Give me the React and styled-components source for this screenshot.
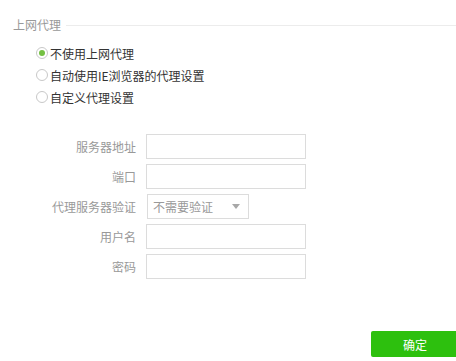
import React, { useState } from "react";
import styled, { createGlobalStyle } from "styled-components";

const GlobalStyle = createGlobalStyle`
  html, body {
    margin: 0;
    padding: 0;
    background: #fff;
    overflow: hidden;
  }
  body {
    font-family: "Noto Sans CJK SC", "Microsoft YaHei", sans-serif;
    font-size: 12px;
    color: #333;
  }
`;

const Page = styled.div`
  width: 456px;
  height: 361px;
  padding-top: 17px;
  box-sizing: border-box;
  display: flex;
  flex-direction: column;
`;

const Legend = styled.div`
  display: flex;
  align-items: center;
  gap: 5px;
  padding-left: 13px;
  height: 16px;
  line-height: 16px;
  color: #999;
  &::after {
    content: "";
    flex: 1;
    border-top: 1px solid #ececec;
  }
`;

const RadioGroup = styled.div`
  margin-top: 9px;
  padding-left: 36px;
  display: flex;
  flex-direction: column;
`;

const RadioRow = styled.label`
  display: flex;
  align-items: center;
  height: 22px;
  gap: 2px;
  cursor: pointer;
  color: #333;
`;

const Circle = styled.span`
  width: 12px;
  height: 12px;
  box-sizing: border-box;
  border: 1px solid #c8c8c8;
  border-radius: 50%;
  display: flex;
  align-items: center;
  justify-content: center;
  background: #fff;
  &::after {
    content: "";
    width: 6px;
    height: 6px;
    border-radius: 50%;
    background: ${(p) => (p.$checked ? "#74c043" : "transparent")};
  }
`;

const Form = styled.div`
  margin-top: 26px;
  display: grid;
  grid-template-columns: 136px 160px;
  column-gap: 10px;
  row-gap: 5px;
  align-items: center;
`;

const Label = styled.span`
  text-align: right;
  color: #999;
  line-height: 25px;
`;

const Input = styled.input`
  width: 160px;
  height: 25px;
  box-sizing: border-box;
  border: 1px solid #dcdcdc;
  outline: none;
  padding: 0 5px;
  font: inherit;
`;

const Select = styled.div`
  width: 102px;
  height: 25px;
  box-sizing: border-box;
  border: 1px solid #dcdcdc;
  margin-left: 1px;
  display: flex;
  align-items: center;
  justify-content: space-between;
  padding: 0 6px 0 5px;
  color: #999;
  &::after {
    content: "";
    border-left: 4px solid transparent;
    border-right: 4px solid transparent;
    border-top: 5px solid #a8a8a8;
    margin-right: 2px;
  }
`;

const Footer = styled.div`
  margin-top: auto;
  margin-bottom: 4px;
  display: flex;
  justify-content: flex-end;
`;

const Button = styled.button`
  width: 88px;
  height: 26px;
  margin-right: -3px;
  border: none;
  border-radius: 2px;
  background: #2dc00e;
  color: #fff;
  font: inherit;
  cursor: pointer;
`;

const options = ["不使用上网代理", "自动使用IE浏览器的代理设置", "自定义代理设置"];

export default function App() {
  const [mode, setMode] = useState(0);
  return (
    <>
      <GlobalStyle />
      <Page>
        <Legend>上网代理</Legend>
        <RadioGroup>
          {options.map((o, i) => (
            <RadioRow key={i} onClick={() => setMode(i)}>
              <Circle $checked={mode === i} />
              {o}
            </RadioRow>
          ))}
        </RadioGroup>
        <Form>
          <Label>服务器地址</Label>
          <Input />
          <Label>端口</Label>
          <Input />
          <Label>代理服务器验证</Label>
          <Select>不需要验证</Select>
          <Label>用户名</Label>
          <Input />
          <Label>密码</Label>
          <Input type="password" />
        </Form>
        <Footer>
          <Button>确定</Button>
        </Footer>
      </Page>
    </>
  );
}
